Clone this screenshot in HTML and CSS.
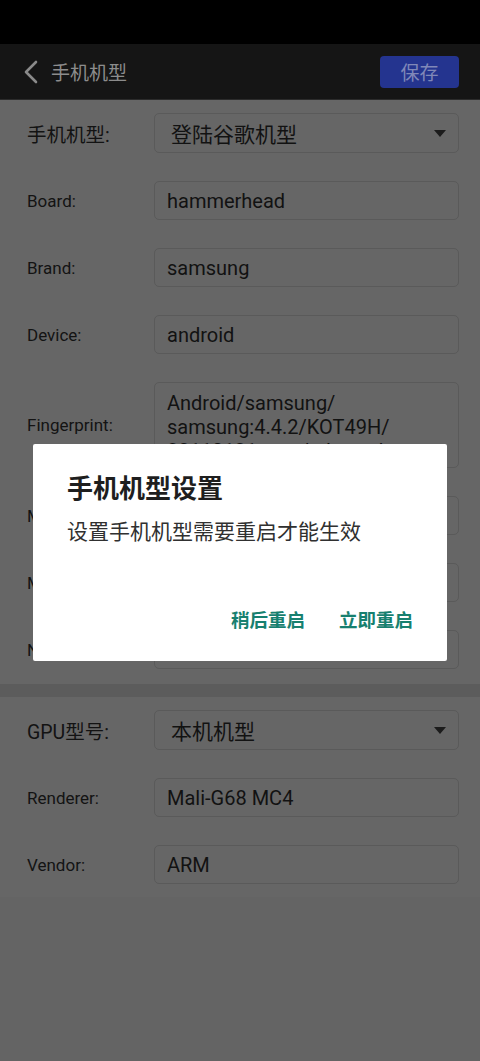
FILE: index.html
```html
<!DOCTYPE html>
<html lang="zh-CN">
<head>
<meta charset="utf-8">
<title>手机机型</title>
<link rel="stylesheet" href="styles.css">
</head>
<body>
<div class="screen">
  <div class="status"></div>
  <header class="toolbar">
    <svg class="back" width="18" height="24" viewBox="0 0 18 24"><polyline points="14,2 4,12 14,22" fill="none" stroke="#8a8a8a" stroke-width="2.6" stroke-linecap="round" stroke-linejoin="round"/></svg>
    <span class="title">手机机型</span>
    <span class="save">保存</span>
  </header>

  <section class="section">
    <div class="row">
      <span class="label cjk">手机机型:</span>
      <div class="box select"><span>登陆谷歌机型</span><i class="tri"></i></div>
    </div>
    <div class="row">
      <span class="label">Board:</span>
      <div class="box">hammerhead</div>
    </div>
    <div class="row">
      <span class="label">Brand:</span>
      <div class="box">samsung</div>
    </div>
    <div class="row">
      <span class="label">Device:</span>
      <div class="box">android</div>
    </div>
    <div class="row">
      <span class="label">Fingerprint:</span>
      <div class="box multi">Android/samsung/<br>samsung:4.4.2/KOT49H/<br>20110131:user/release-keys</div>
    </div>
    <div class="row">
      <span class="label">Manufacturer:</span>
      <div class="box">samsung</div>
    </div>
    <div class="row">
      <span class="label">Model:</span>
      <div class="box">Nexus 5</div>
    </div>
    <div class="row">
      <span class="label">Name:</span>
      <div class="box">hammerhead</div>
    </div>
  </section>

  <div class="divider"></div>

  <section class="section">
    <div class="row">
      <span class="label cjk">GPU型号:</span>
      <div class="box select"><span>本机机型</span><i class="tri"></i></div>
    </div>
    <div class="row">
      <span class="label">Renderer:</span>
      <div class="box">Mali-G68 MC4</div>
    </div>
    <div class="row">
      <span class="label">Vendor:</span>
      <div class="box">ARM</div>
    </div>
  </section>

  <div class="dialog">
    <div class="d-title">手机机型设置</div>
    <div class="d-msg">设置手机机型需要重启才能生效</div>
    <div class="d-actions">
      <span class="d-btn">稍后重启</span>
      <span class="d-btn">立即重启</span>
    </div>
  </div>
</div>
</body>
</html>
```

FILE: styles.css
```css
* { box-sizing: border-box; }
html, body { margin: 0; padding: 0; }
body {
  background: #646464;
  font-family: "Roboto", "Noto Sans CJK SC", sans-serif;
  color: #111;
}
.screen {
  position: relative;
  width: 480px;
  height: 1061px;
  overflow: hidden;
  background: #646464;
}
.status { height: 44px; background: #000; }
.toolbar {
  height: 56px;
  background: #151515;
  border-bottom: 1px solid #2b2b2b;
  display: flex;
  align-items: center;
  padding: 0 21px 0 22px;
}
.back { display: block; flex: none; }
.title {
  margin-left: 11px;
  font-size: 19px;
  color: #8c8c8c;
  font-family: "Noto Sans CJK SC", sans-serif;
}
.save {
  margin-left: auto;
  width: 79px;
  height: 32px;
  border-radius: 4px;
  background: #24348f;
  color: #8088b8;
  font-size: 19px;
  font-family: "Noto Sans CJK SC", sans-serif;
  display: flex;
  align-items: center;
  justify-content: center;
}
.section {
  background: #666;
  padding: 13px 21px 15px 27px;
  display: flex;
  flex-direction: column;
  gap: 28px;
}
.section + .divider + .section { padding-bottom: 13px; }
.divider { height: 13px; background: #5c5c5c; }
.row {
  display: flex;
  align-items: center;
}
.label {
  width: 127px;
  flex: none;
  font-size: 17px;
  color: #131313;
  white-space: nowrap;
}
.label.cjk { font-size: 19.5px; }
.box {
  flex: 1;
  height: 39px;
  border: 1px solid #5a5a5a;
  border-radius: 5px;
  padding: 0 12px;
  display: flex;
  align-items: center;
  font-size: 20px;
  color: #121212;
  white-space: nowrap;
  overflow: hidden;
}
.box.select {
  height: 40px;
  padding: 0 12px 0 16px;
  font-size: 21px;
  font-family: "Noto Sans CJK SC", sans-serif;
  justify-content: space-between;
}
.tri {
  width: 0; height: 0;
  border-left: 6.5px solid transparent;
  border-right: 6.5px solid transparent;
  border-top: 7px solid #1c1c1c;
}
.box.multi {
  height: 86px;
  display: block;
  padding-top: 8px;
  line-height: 24px;
}
.dialog {
  position: absolute;
  left: 33px;
  top: 444px;
  width: 414px;
  height: 217px;
  background: #fff;
  border-radius: 2px;
  padding: 27px 34px 24px 34px;
  display: flex;
  flex-direction: column;
  font-family: "Noto Sans CJK SC", sans-serif;
}
.d-title {
  font-size: 26px;
  line-height: 32px;
  font-weight: 600;
  color: #1e1e1e;
}
.d-msg {
  margin-top: 13px;
  font-size: 21px;
  line-height: 28px;
  color: #303030;
}
.d-actions {
  margin-top: auto;
  display: flex;
  justify-content: flex-end;
  gap: 34px;
  height: 36px;
  align-items: center;
}
.d-btn {
  font-size: 18.5px;
  font-weight: 600;
  color: #17806f;
}
```
